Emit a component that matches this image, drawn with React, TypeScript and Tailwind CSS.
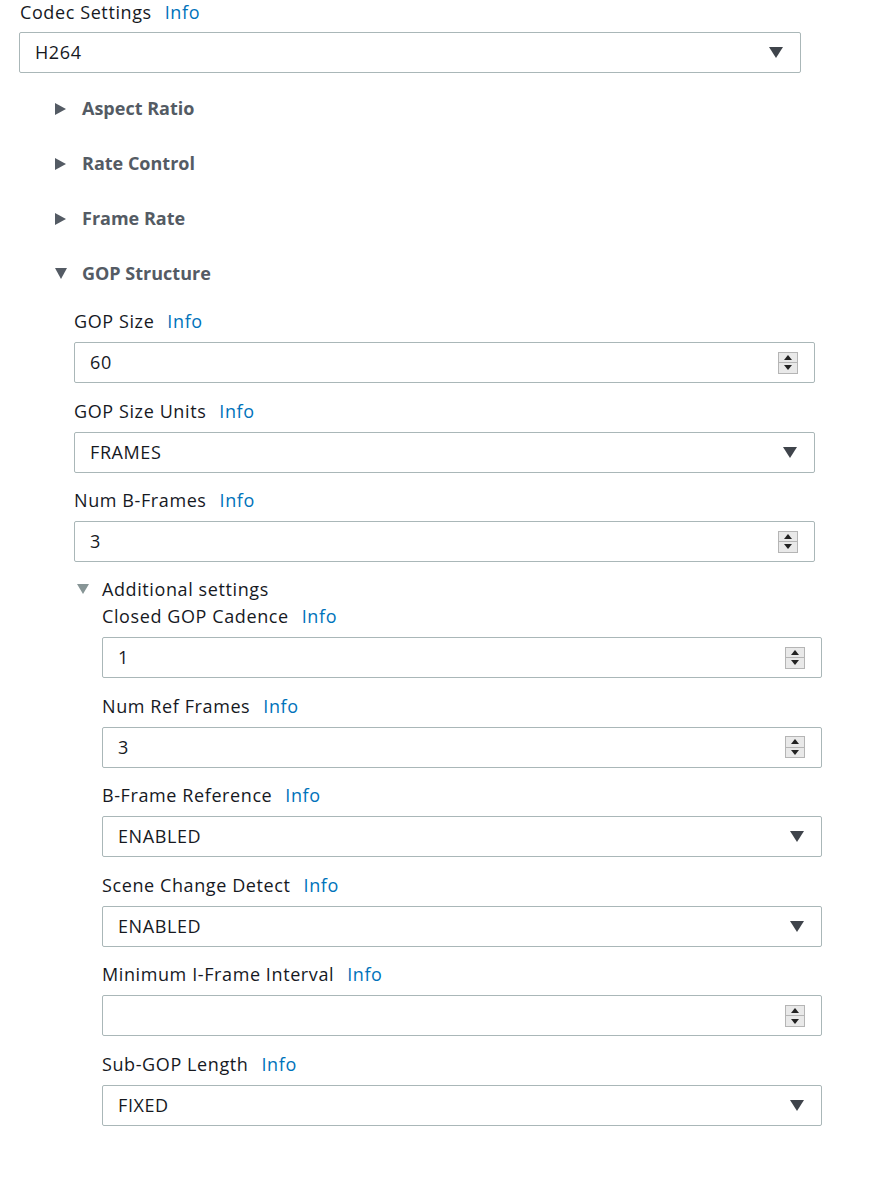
import React from "react";

const font = { fontFamily: '"Open Sans", "Noto Sans", Arial, sans-serif' };

function Info() {
  return <span className="ml-[13px] text-[#0073bb]">Info</span>;
}

function Label({ text }: { text: string }) {
  return (
    <div className="h-[20px] flex items-center text-[18px] leading-[20px] text-[#16191f] tracking-[0.6px]">
      <span>{text}</span>
      <Info />
    </div>
  );
}

function Spinner() {
  return (
    <div className="w-[20px] h-[22px] border border-[#b5b5b5] bg-[#e9e9e9] flex flex-col">
      <div className="flex-1 flex items-center justify-center border-b border-[#b5b5b5]">
        <svg width="8" height="5" viewBox="0 0 8 5"><path d="M4 0 L8 5 L0 5 Z" fill="#222" /></svg>
      </div>
      <div className="flex-1 flex items-center justify-center">
        <svg width="8" height="5" viewBox="0 0 8 5"><path d="M0 0 L8 0 L4 5 Z" fill="#222" /></svg>
      </div>
    </div>
  );
}

function Caret() {
  return (
    <svg width="14" height="11" viewBox="0 0 14 11">
      <path d="M0 0 L14 0 L7 11 Z" fill="#3f444b" />
    </svg>
  );
}

function Box({ value, kind }: { value: string; kind: "num" | "sel" }) {
  return (
    <div
      className={`h-[41px] border border-[#aab7b8] rounded-[2px] bg-white flex items-center pl-[15px] justify-between ${
        kind === "num" ? "pr-[16px]" : "pr-[17px]"
      }`}
    >
      <span className="text-[18px] text-[#16191f] tracking-[0.6px]">{value}</span>
      {kind === "num" ? <Spinner /> : <Caret />}
    </div>
  );
}

function Field({ label, value, kind }: { label: string; value: string; kind: "num" | "sel" }) {
  return (
    <div className="flex flex-col">
      <Label text={label} />
      <div className="mt-[11px]">
        <Box value={value} kind={kind} />
      </div>
    </div>
  );
}

function Section({ title, open }: { title: string; open?: boolean }) {
  return (
    <div className="h-[55px] flex items-center">
      <div className="w-[27px] flex items-center">
        {open ? (
          <svg width="12" height="11" viewBox="0 0 12 11"><path d="M0 0 L12 0 L6 11 Z" fill="#545b64" /></svg>
        ) : (
          <svg width="11" height="12" viewBox="0 0 11 12"><path d="M0 0 L11 6 L0 12 Z" fill="#545b64" /></svg>
        )}
      </div>
      <span className="text-[18px] font-bold text-[#545b64]">{title}</span>
    </div>
  );
}

export default function App() {
  return (
    <div className="w-[872px] h-[1179px] bg-white" style={font}>
      <div className="pt-[2px] pl-[20px]">
        <Label text="Codec Settings" />
      </div>
      <div className="ml-[19px] w-[782px] mt-[10px]">
        <Box value="H264" kind="sel" />
      </div>
      <div className="ml-[55px] mt-[8px]">
        <Section title="Aspect Ratio" />
        <Section title="Rate Control" />
        <Section title="Frame Rate" />
        <Section title="GOP Structure" open />
      </div>
      <div className="ml-[74px] w-[741px] mt-[10px] flex flex-col gap-[17.5px]">
        <Field label="GOP Size" value="60" kind="num" />
        <Field label="GOP Size Units" value="FRAMES" kind="sel" />
        <Field label="Num B-Frames" value="3" kind="num" />
      </div>
      <div className="ml-[77px] mt-[17px] h-[20px] flex items-center">
        <svg width="12" height="10" viewBox="0 0 12 10"><path d="M0 0 L12 0 L6 10 Z" fill="#879596" /></svg>
        <span className="ml-[13px] text-[18px] tracking-[0.6px] text-[#16191f]">Additional settings</span>
      </div>
      <div className="ml-[102px] w-[720px] mt-[7px] flex flex-col gap-[17.6px]">
        <Field label="Closed GOP Cadence" value="1" kind="num" />
        <Field label="Num Ref Frames" value="3" kind="num" />
        <Field label="B-Frame Reference" value="ENABLED" kind="sel" />
        <Field label="Scene Change Detect" value="ENABLED" kind="sel" />
        <Field label="Minimum I-Frame Interval" value="" kind="num" />
        <Field label="Sub-GOP Length" value="FIXED" kind="sel" />
      </div>
    </div>
  );
}
